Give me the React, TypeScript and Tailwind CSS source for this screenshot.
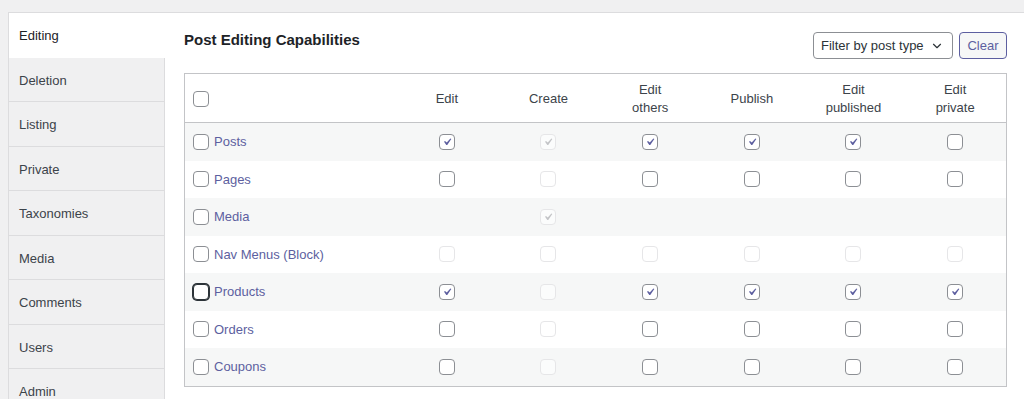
import { ChevronDown } from 'lucide-react';

// ─── Types ────────────────────────────────────

type Cell = 'on' | 'off' | 'dis' | 'dison' | 'none';

interface CapRow {
  label: string;
  cells: Cell[];
}

// ─── Data ─────────────────────────────────────

const TABS = ['Editing', 'Deletion', 'Listing', 'Private', 'Taxonomies', 'Media', 'Comments', 'Users', 'Admin'];

const COLUMNS: string[][] = [
  ['Edit'],
  ['Create'],
  ['Edit', 'others'],
  ['Publish'],
  ['Edit', 'published'],
  ['Edit', 'private'],
];

const ROWS: CapRow[] = [
  { label: 'Posts',             cells: ['on', 'dison', 'on', 'on', 'on', 'off'] },
  { label: 'Pages',             cells: ['off', 'dis', 'off', 'off', 'off', 'off'] },
  { label: 'Media',             cells: ['none', 'dison', 'none', 'none', 'none', 'none'] },
  { label: 'Nav Menus (Block)', cells: ['dis', 'dis', 'dis', 'dis', 'dis', 'dis'] },
  { label: 'Products',          cells: ['on', 'dis', 'on', 'on', 'on', 'on'] },
  { label: 'Orders',            cells: ['off', 'dis', 'off', 'off', 'off', 'off'] },
  { label: 'Coupons',           cells: ['off', 'dis', 'off', 'off', 'off', 'off'] },
];

// ─── Checkbox ─────────────────────────────────

function Box({ state, focused = false }: { state: Cell; focused?: boolean }) {
  if (state === 'none') return null;
  const disabled = state === 'dis' || state === 'dison';
  const checked = state === 'on' || state === 'dison';
  return (
    <span
      className={`w-4 h-4 rounded-[4px] border bg-white flex items-center justify-center flex-shrink-0 ${
        focused
          ? 'border-[#2c3338] ring-1 ring-[#2c3338]'
          : disabled
          ? 'border-[#e6e6e8] bg-white/60'
          : 'border-[#8c8f94]'
      }`}
    >
      {checked && (
        <svg viewBox="0 0 20 20" className="w-[18px] h-[18px]">
          <path
            d="M14.83 4.89l1.34.94-5.81 8.38H9.02L5.78 9.67l1.34-1.25 2.57 2.4z"
            fill={disabled ? '#c3c4c7' : '#5d5fa0'}
          />
        </svg>
      )}
    </span>
  );
}

// ─── Page ─────────────────────────────────────

export default function App() {
  return (
    <div
      className="h-[399px] w-full overflow-hidden bg-[#f0f0f1] pt-3 pl-2 text-[13px] text-[#2c3338]"
      style={{ fontFamily: '"Liberation Sans", Arial, sans-serif' }}
    >
      <div className="flex h-[420px] bg-white border-t border-l border-[#dcdcde]">

        {/* Tabs */}
        <div className="w-[156px] flex-shrink-0 flex flex-col">
          {TABS.map((t, i) => (
            <div
              key={t}
              className={`h-[44.5px] flex-shrink-0 flex items-center pl-[10px] pt-[2px] border-b border-[#dcdcde] ${
                i === 0
                  ? 'bg-white border-b-transparent text-[#1d2327]'
                  : 'bg-[#f0f0f1] border-r text-[#3c434a]'
              }`}
            >
              {t}
            </div>
          ))}
          <div className="flex-1 bg-[#f0f0f1] border-r border-[#dcdcde]" />
        </div>

        {/* Content */}
        <div className="flex-1 pl-[19px] pr-[17px]">
          <div className="flex items-start justify-between">
            <h2 className="pt-[17px] text-[15px] font-bold text-[#1d2327] leading-5">
              Post Editing Capabilities
            </h2>
            <div className="flex gap-[6px] mt-[19px]">
              <div className="w-[140px] h-[27px] flex items-center justify-between pl-[7px] pr-[8px] border border-[#8c8f94] rounded-[4px] bg-white text-[13px] text-[#2c3338] whitespace-nowrap">
                <span>Filter by post type</span>
                <ChevronDown size={14} strokeWidth={2} className="text-[#2c3338]" />
              </div>
              <button className="w-[48px] h-[27px] border border-[#5d5fa0] rounded-[4px] bg-[#f6f7f7] text-[13px] text-[#5d5fa0]">
                Clear
              </button>
            </div>
          </div>

          <div className="mt-[14px] border border-[#c3c4c7]">
            {/* Header */}
            <div className="grid grid-cols-[211px_repeat(6,1fr)] h-[49px] border-b border-[#c3c4c7] items-center">
              <div className="pl-[8px] pt-[1px]">
                <Box state="off" />
              </div>
              {COLUMNS.map((c, i) => (
                <div key={i} className="text-center leading-[18px] text-[#3c434a] pt-[2px]">
                  {c.map(l => <div key={l}>{l}</div>)}
                </div>
              ))}
            </div>

            {/* Rows */}
            {ROWS.map((r, ri) => (
              <div
                key={r.label}
                className={`grid grid-cols-[211px_repeat(6,1fr)] h-[37.5px] items-center ${
                  ri % 2 === 0 ? 'bg-[#f6f7f7]' : 'bg-white'
                }`}
              >
                <div className="pl-[8px] flex items-center gap-[5px]">
                  <Box state="off" focused={r.label === 'Products'} />
                  <span className="text-[#5d5fa0]">{r.label}</span>
                </div>
                {r.cells.map((c, ci) => (
                  <div key={ci} className="flex justify-center">
                    <Box state={c} />
                  </div>
                ))}
              </div>
            ))}
          </div>
        </div>

      </div>
    </div>
  );
}
